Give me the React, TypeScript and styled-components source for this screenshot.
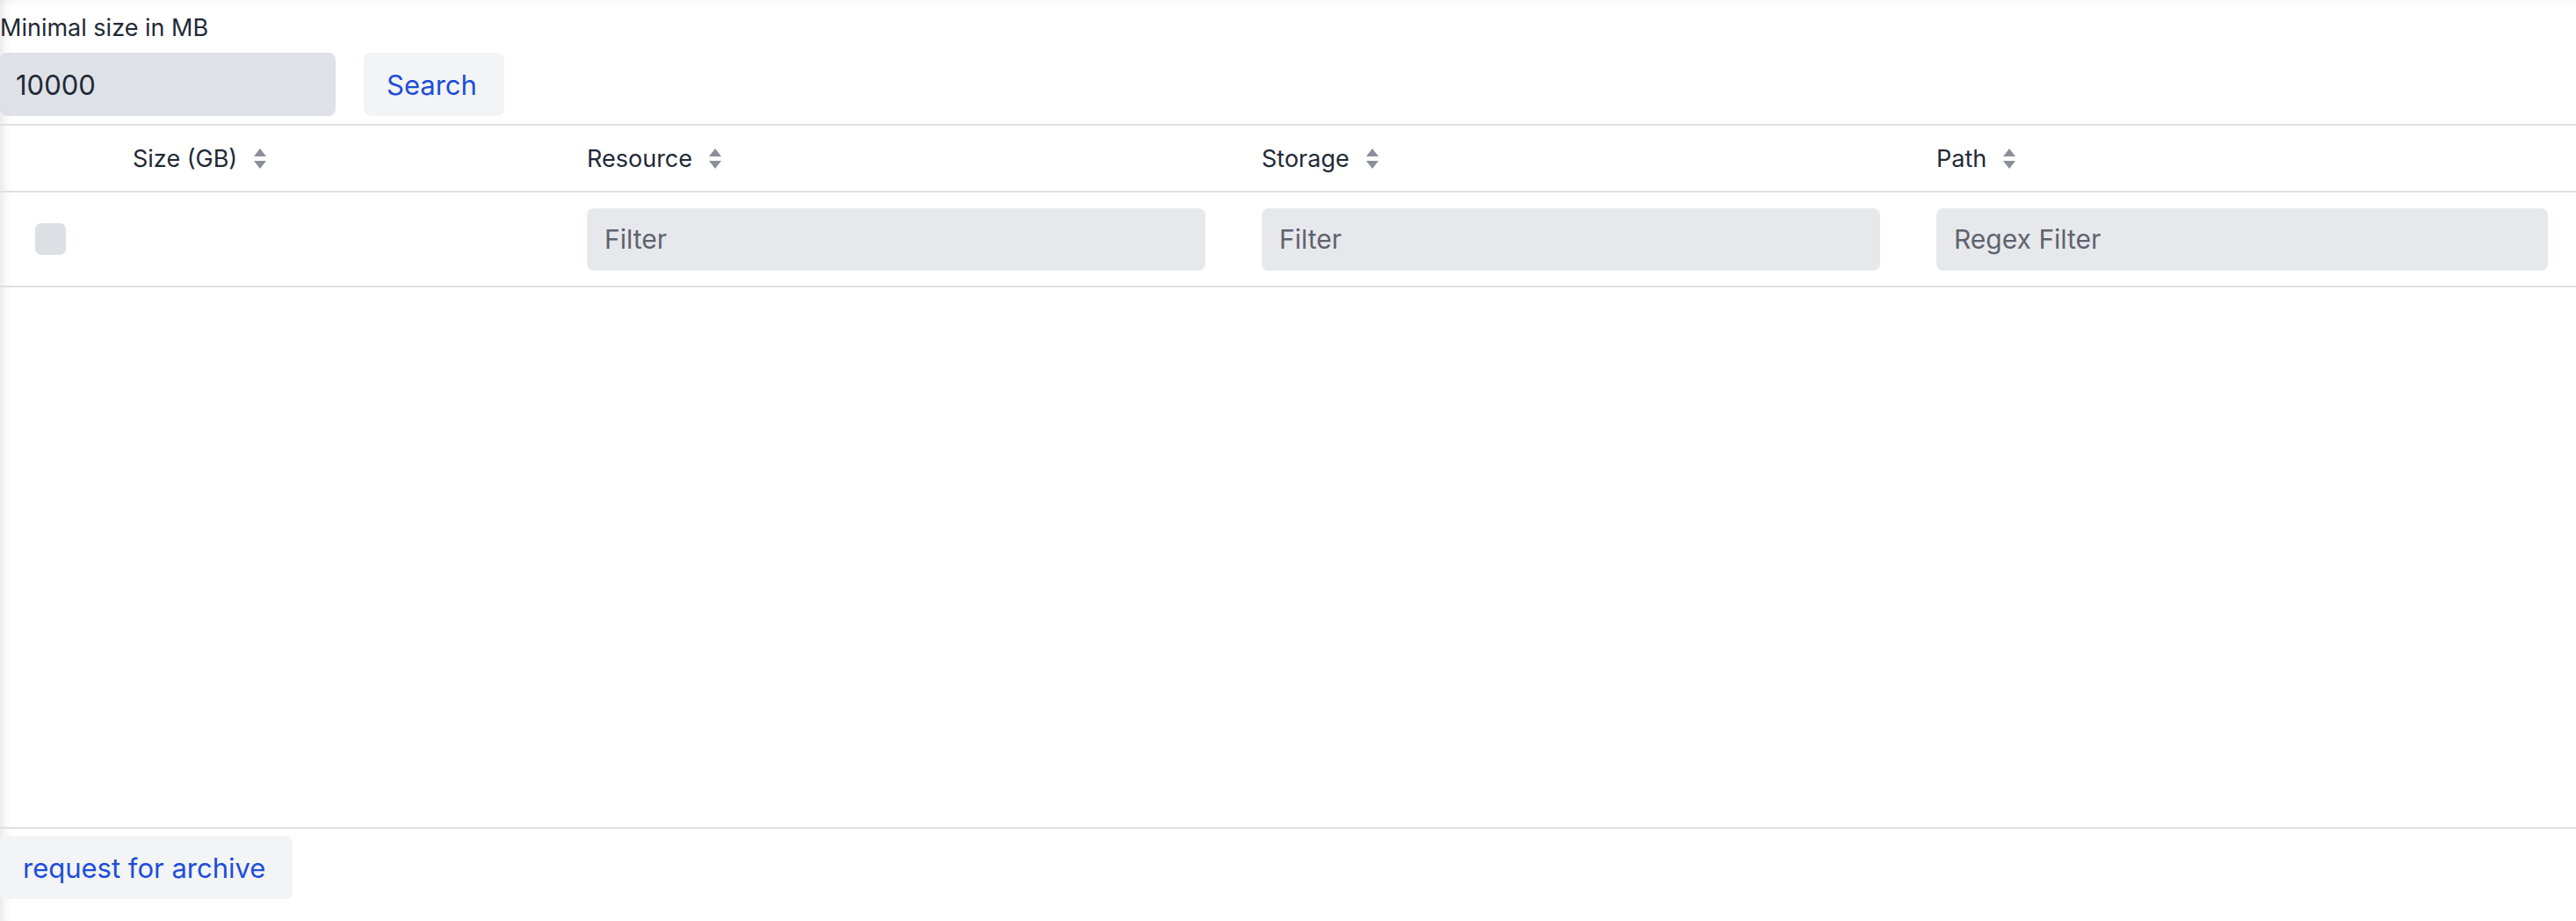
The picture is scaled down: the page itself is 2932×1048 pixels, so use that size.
import React from "react";
import styled, { createGlobalStyle } from "styled-components";

const Global = createGlobalStyle`
  html, body { margin: 0; padding: 0; background: #fff; }
  body { font-family: Inter, "Noto Sans", "Liberation Sans", sans-serif; color: #1f2937; }
`;

const Page = styled.div`
  position: relative;
  width: 2932px;
  height: 1048px;
  display: flex;
  flex-direction: column;
  box-shadow: inset 14px 0 14px -12px rgba(0,0,0,0.12), inset 0 10px 10px -10px rgba(0,0,0,0.06);
`;

const Label = styled.div`
  font-size: 27px;
  line-height: 28px;
  padding-top: 18px;
  height: 42px;
`;

const SearchBar = styled.div`
  display: flex;
  gap: 32px;
  height: 72px;
  margin-bottom: 9px;
`;

const SizeInput = styled.input`
  width: 382px;
  height: 72px;
  box-sizing: border-box;
  border: none;
  border-radius: 8px;
  background: #dee1e6;
  padding: 0 18px;
  font: inherit;
  font-size: 31px;
  color: #1f2937;
  outline: none;
`;

const Button = styled.button<{ $w: number }>`
  width: ${(p) => p.$w}px;
  height: 72px;
  border: none;
  border-radius: 8px;
  background: #f3f4f6;
  color: #1d4ed8;
  font: inherit;
  font-size: 31px;
  padding: 0 26px;
  text-align: left;
  cursor: pointer;
`;

const Row = styled.div<{ $h: number }>`
  display: grid;
  grid-template-columns: 119px 517px 768px 768px 1fr;
  align-items: center;
  height: ${(p) => p.$h}px;
  border-top: 2px solid #dde0e5;
`;

const Cell = styled.div`
  padding: 0 32px;
  display: flex;
  align-items: center;
  gap: 18px;
  font-size: 27px;
`;

const FirstCell = styled.div`
  padding-left: 40px;
  display: flex;
  align-items: center;
`;

const Check = styled.div`
  width: 35px;
  height: 36px;
  border-radius: 7px;
  background: #dcdfe4;
`;

const FilterInput = styled.input`
  width: 100%;
  height: 71px;
  box-sizing: border-box;
  border: none;
  border-radius: 8px;
  background: #e7e8ec;
  padding: 0 20px;
  font: inherit;
  font-size: 30px;
  outline: none;
  &::placeholder { color: #5e636e; }
`;

const Spacer = styled.div`
  flex: 1;
  border-top: 2px solid #dde0e5;
`;

const Footer = styled.div`
  border-top: 2px solid #dde0e5;
  height: 107px;
  padding-top: 8px;
  box-sizing: border-box;
`;

const Sort = () => (
  <svg width="16" height="23" viewBox="0 0 16 23">
    <path d="M8 0 L15 9 H1 Z" fill="#8b8f99" />
    <path d="M8 23 L15 14 H1 Z" fill="#8b8f99" />
  </svg>
);

export default function App() {
  return (
    <Page>
      <Global />
      <Label>Minimal size in MB</Label>
      <SearchBar>
        <SizeInput defaultValue="10000" />
        <Button $w={160}>Search</Button>
      </SearchBar>
      <Row $h={74}>
        <FirstCell />
        <Cell>Size (GB) <Sort /></Cell>
        <Cell>Resource <Sort /></Cell>
        <Cell>Storage <Sort /></Cell>
        <Cell>Path <Sort /></Cell>
      </Row>
      <Row $h={106}>
        <FirstCell><Check /></FirstCell>
        <Cell />
        <Cell><FilterInput placeholder="Filter" /></Cell>
        <Cell><FilterInput placeholder="Filter" /></Cell>
        <Cell><FilterInput placeholder="Regex Filter" /></Cell>
      </Row>
      <Spacer />
      <Footer>
        <Button $w={333}>request for archive</Button>
      </Footer>
    </Page>
  );
}
